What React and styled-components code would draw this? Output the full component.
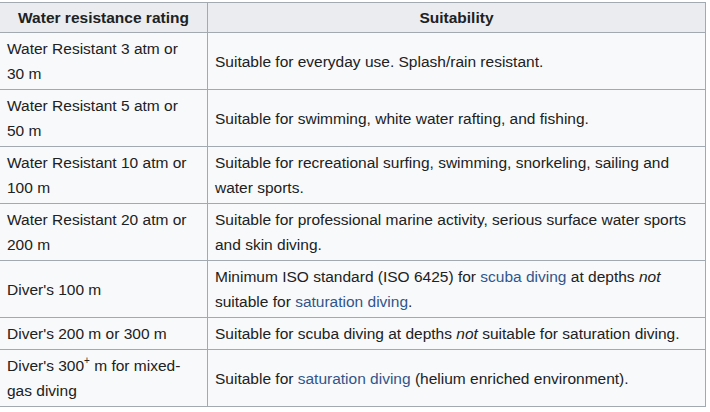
import React from "react";
import styled, { createGlobalStyle } from "styled-components";

const GlobalStyle = createGlobalStyle`
	html, body {
		margin: 0;
		padding: 0;
		background: #ffffff;
	}
	body {
		font-family: "Liberation Sans", Arial, sans-serif;
		color: #202122;
	}
`;

const Page = styled.div`
	padding-top: 2px;
	margin-left: -1px;
	width: 707px;
`;

const Table = styled.table`
	width: 100%;
	border-collapse: collapse;
	background: #f8f9fa;
	border: 1px solid #a2a9b1;
	font-size: 15.5px;
	line-height: 25px;
	color: #202122;
`;

const HeadCell = styled.th`
	background: #eaecf0;
	border: 1px solid #a2a9b1;
	padding: 2px 7px;
	font-weight: bold;
	text-align: center;
	width: ${(p) => p.$width || "auto"};
`;

const Cell = styled.td`
	border: 1px solid #a2a9b1;
	padding: ${(p) => (p.$first ? "3px 12px 3px 7px" : "3px 7px")};
	vertical-align: middle;
	text-align: left;
`;

const WikiLink = styled.a`
	color: #30558c;
	text-decoration: none;
`;

const Sup = styled.sup`
	font-size: 10px;
	line-height: 0;
	vertical-align: 7px;
`;

const rows = [
	{
		rating: "Water Resistant 3 atm or 30 m",
		suit: "Suitable for everyday use. Splash/rain resistant.",
	},
	{
		rating: "Water Resistant 5 atm or 50 m",
		suit: "Suitable for swimming, white water rafting, and fishing.",
	},
	{
		rating: "Water Resistant 10 atm or 100 m",
		suit: "Suitable for recreational surfing, swimming, snorkeling, sailing and water sports.",
	},
	{
		rating: "Water Resistant 20 atm or 200 m",
		suit: "Suitable for professional marine activity, serious surface water sports and skin diving.",
	},
	{
		rating: "Diver's 100 m",
		suit: (
			<>
				Minimum ISO standard (ISO 6425) for{" "}
				<WikiLink href="#">scuba diving</WikiLink> at depths <i>not</i>{" "}
				suitable for <WikiLink href="#">saturation diving</WikiLink>.
			</>
		),
	},
	{
		rating: "Diver's 200 m or 300 m",
		suit: (
			<>
				Suitable for scuba diving at depths <i>not</i> suitable for
				saturation diving.
			</>
		),
	},
	{
		rating: (
			<>
				Diver's 300<Sup>+</Sup> m for mixed-gas diving
			</>
		),
		suit: (
			<>
				Suitable for <WikiLink href="#">saturation diving</WikiLink>{" "}
				(helium enriched environment).
			</>
		),
	},
];

export default function App() {
	return (
		<>
			<GlobalStyle />
			<Page>
				<Table>
					<thead>
						<tr>
							<HeadCell $width="193px">Water resistance rating</HeadCell>
							<HeadCell>Suitability</HeadCell>
						</tr>
					</thead>
					<tbody>
						{rows.map((row, idx) => (
							<tr key={idx}>
								<Cell $first>{row.rating}</Cell>
								<Cell>{row.suit}</Cell>
							</tr>
						))}
					</tbody>
				</Table>
			</Page>
		</>
	);
}
